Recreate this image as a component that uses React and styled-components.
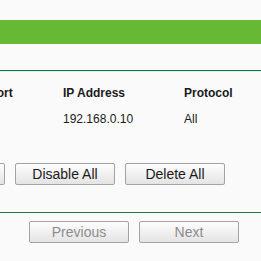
import React from 'react';
import styled, { createGlobalStyle } from 'styled-components';

const rows = [
  { id: 1, port: '80', ip: '192.168.0.10', protocol: 'All', status: 'Enabled' },
];

const App = () => {
  return (
    <>
      <GlobalStyle />
      <Page>
        <Banner />
        <TopRule />
        <Section>
          <Table>
            <HeadCell>ID</HeadCell>
            <HeadCell>Internal Port</HeadCell>
            <HeadCell>IP Address</HeadCell>
            <HeadCell>Protocol</HeadCell>
            <HeadCell>Status</HeadCell>
            {rows.map(row => (
              <React.Fragment key={row.id}>
                <Cell>{row.id}</Cell>
                <Cell>{row.port}</Cell>
                <Cell>{row.ip}</Cell>
                <Cell>{row.protocol}</Cell>
                <Cell>{row.status}</Cell>
              </React.Fragment>
            ))}
          </Table>
          <ButtonRow>
            <Button>Enable All</Button>
            <Button>Disable All</Button>
            <Button>Delete All</Button>
          </ButtonRow>
        </Section>
        <BottomRule />
        <PagerRow>
          <Button disabled>Previous</Button>
          <Button disabled>Next</Button>
        </PagerRow>
      </Page>
    </>
  );
};

export default App;

const GlobalStyle = createGlobalStyle`
  html, body {
    margin: 0;
    padding: 0;
    overflow: hidden;
    background: #fafafa;
  }
  body {
    font-family: "Liberation Sans", Arial, sans-serif;
    color: #1a1a1a;
  }
`;

const Page = styled.div`
  width: 261px;
  height: 261px;
  padding-top: 20px;
  box-sizing: border-box;
  overflow: hidden;
`;

const Banner = styled.div`
  height: 24px;
  background: #67b934;
`;

const TopRule = styled.div`
  margin-top: 26px;
  border-top: 1px solid #0f7a3d;
  border-bottom: 1px solid #e6e6e6;
`;

const Section = styled.div`
  margin-left: -95px;
  padding-top: 8px;
`;

const Table = styled.div`
  display: grid;
  grid-template-columns: 37px 121px 121px 121px 100px;
`;

const HeadCell = styled.div`
  font-size: 12px;
  font-weight: 700;
  line-height: 26px;
  white-space: nowrap;
`;

const Cell = styled.div`
  font-size: 12px;
  line-height: 26px;
  white-space: nowrap;
`;

const ButtonRow = styled.div`
  display: flex;
  gap: 10px;
  margin-top: 31px;
`;

const Button = styled.button`
  flex: none;
  width: 100px;
  height: 22px;
  padding: 0;
  border: 1px solid #a3a3a3;
  border-radius: 2px;
  background: linear-gradient(#fdfdfd, #e4e4e4);
  font-family: "Liberation Sans", Arial, sans-serif;
  font-size: 14px;
  color: #1a1a1a;

  &:disabled {
    color: #8c8c8c;
  }
`;

const BottomRule = styled.div`
  margin-top: 27px;
  border-top: 1px solid #1c7d42;
`;

const PagerRow = styled.div`
  display: flex;
  gap: 10px;
  padding-left: 29px;
  margin-top: 8px;
`;
